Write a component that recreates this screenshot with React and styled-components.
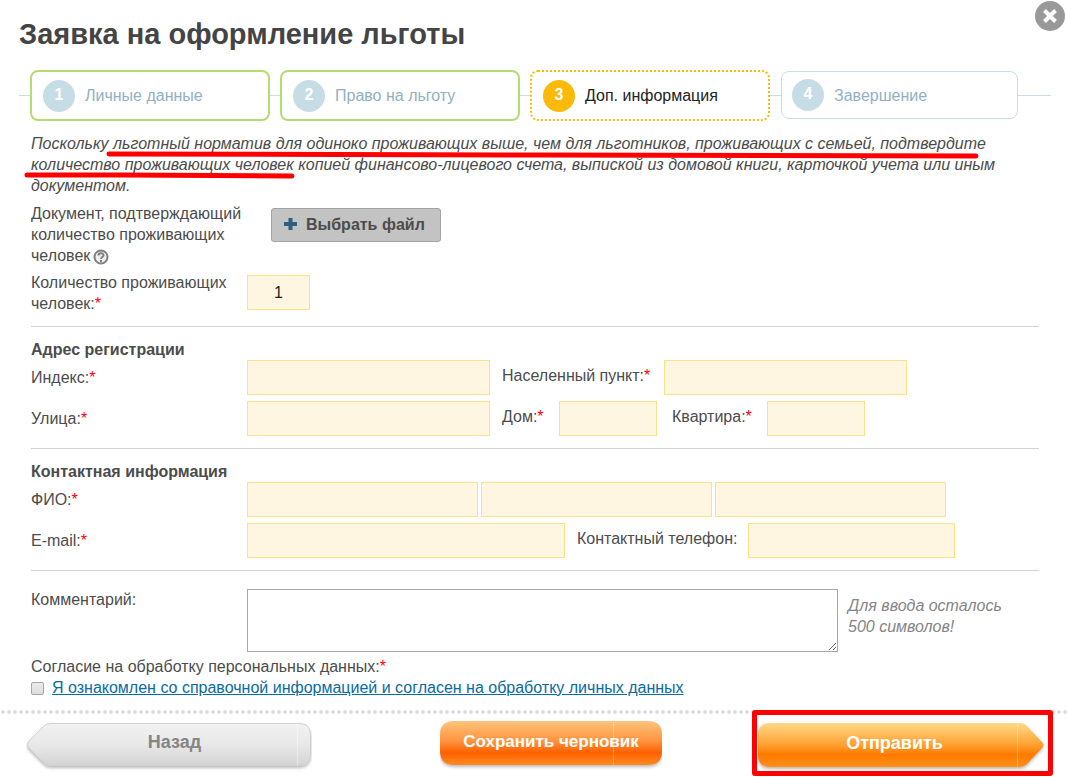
import React, { useId, useState } from "react";
import styled, { createGlobalStyle } from "styled-components";

const GlobalStyle = createGlobalStyle`
  *, *::before, *::after { box-sizing: border-box; }
  body {
    margin: 0;
    background: #fff;
    color: #4c4c4c;
    font-family: "Liberation Sans", Arial, sans-serif;
    font-size: 16px;
    line-height: 21px;
  }
  button, input, textarea { font: inherit; color: inherit; }
`;

const Dialog = styled.main`
  position: relative;
  padding-top: 16px;
`;

const Title = styled.h1`
  margin: 0 60px 18px 19px;
  font-size: 29px;
  line-height: 36px;
  color: #444;
`;

const CloseButton = styled.button`
  position: absolute;
  top: 1px;
  right: 2px;
  width: 30px;
  height: 30px;
  padding: 0;
  border: 0;
  background: none;
  cursor: pointer;
  svg { display: block; }
`;

const Steps = styled.ol`
  position: relative;
  display: grid;
  grid-template-columns: repeat(4, 1fr);
  gap: 10px;
  margin: 0;
  padding: 0 47px 0 30px;
  list-style: none;
  &::before {
    content: "";
    position: absolute;
    left: 19px;
    right: 16px;
    top: 25px;
    border-top: 1px solid #c7dde6;
  }
`;

const stepBorders = {
  done: "2px solid #b4dc73",
  current: "2px dotted #fbb90a",
  next: "1px solid #c7dde6",
};

const Step = styled.li`
  position: relative;
  display: flex;
  align-items: center;
  gap: 10px;
  height: ${(p) => (p.$state === "next" ? 48 : 51)}px;
  margin: ${(p) => (p.$state === "next" ? "1px 2px 0 1px" : "0")};
  padding-left: ${(p) => (p.$state === "next" ? 10 : 11)}px;
  border: ${(p) => stepBorders[p.$state]};
  border-radius: 8px;
  background: #fff;
  color: ${(p) => (p.$state === "current" ? "#222" : "#90b1bf")};
`;

const StepNumber = styled.span`
  width: 32px;
  height: 32px;
  border-radius: 50%;
  background: ${(p) => (p.$active ? "#fbb90a" : "#c7dde6")};
  color: #fff;
  font-weight: bold;
  line-height: 30px;
  text-align: center;
`;

const Form = styled.form`
  padding: 12px 28px 0 31px;
`;

const Note = styled.p`
  position: relative;
  margin: 0;
  font-style: italic;
`;

const Strokes = styled.svg`
  position: absolute;
  left: -7px;
  top: 17px;
  pointer-events: none;
`;

const Section = styled.section`
  padding: ${(p) => (p.$tight ? "7px" : "12px")} 0 12px;
  & + & { border-top: 1px solid #d2d2d2; }
`;

const SectionTitle = styled.h2`
  margin: 0;
  font-size: 16px;
  line-height: 21px;
`;

const Row = styled.div`
  display: flex;
  align-items: flex-start;
  & + & { margin-top: 6px; }
`;

const RowLabel = styled.label`
  flex: 0 0 216px;
  padding-top: ${(p) => p.$drop || 0}px;
`;

const Unbroken = styled.span`
  display: inline-block;
  white-space: nowrap;
`;

const InlineLabel = styled.label`
  flex: 0 0 ${(p) => p.$width}px;
  padding: 5px 0 0 ${(p) => p.$indent || 12}px;
  white-space: nowrap;
`;

const Asterisk = styled.span`
  color: #f00;
`;

const Field = styled.input`
  flex: 0 1 ${(p) => p.$width}px;
  min-width: 0;
  height: 35px;
  margin-top: ${(p) => p.$drop || 0}px;
  padding: 0 6px;
  border: 1px solid #fde08a;
  border-radius: 0;
  background: #fff6e1;
  color: #222;
  text-align: ${(p) => (p.$centered ? "center" : "left")};
  outline: none;
`;

const NameFields = styled.div`
  display: flex;
  flex: 1;
  gap: 3px;
`;

const FileButton = styled.button`
  display: flex;
  align-items: center;
  gap: 9px;
  height: 34px;
  margin: 5px 0 0 24px;
  padding: 0 15px 2px 12px;
  border: 1px solid #a3a3a3;
  border-radius: 3px;
  background: #c3c3c3;
  font-weight: bold;
  cursor: pointer;
`;

const HelpIcon = styled.svg`
  margin-left: 3px;
  vertical-align: -4px;
`;

const Comment = styled.textarea`
  flex: 1;
  min-width: 0;
  height: 63px;
  border: 1px solid #a9a9a9;
  outline: none;
`;

const Hint = styled.p`
  flex: 0 0 201px;
  margin: 0;
  padding: 6px 30px 0 10px;
  color: #858585;
  font-style: italic;
`;

const CommentSection = styled.section`
  padding-top: 18px;
  border-top: 1px solid #d2d2d2;
`;

const Consent = styled.fieldset`
  min-width: 0;
  margin: 4px 0 0;
  padding: 0;
  border: 0;
`;

const ConsentTitle = styled.legend`
  padding: 0;
`;

const ConsentRow = styled.div`
  display: flex;
  align-items: center;
  gap: 8px;
`;

const Checkbox = styled.input`
  appearance: none;
  width: 13px;
  height: 13px;
  margin: 2px 0 0;
  border: 1px solid #a5a5a5;
  border-radius: 2px;
  background: linear-gradient(#ececec, #dcdcdc);
  &:checked { background: #1670a8; }
`;

const Link = styled.a`
  color: #086ca2;
`;

const Footer = styled.footer`
  display: flex;
  align-items: flex-start;
  margin-top: 12px;
  padding: 0 14px 0 26px;
  background: radial-gradient(circle, #dedede 0 1px, #e4e4e4 2px, transparent 2px) 0 0 / 6px 4px repeat-x;
`;

const ActionButton = styled.button`
  position: relative;
  display: block;
  width: ${(p) => p.$width}px;
  height: 52px;
  margin: ${(p) => p.$margin || 0};
  padding: ${(p) => p.$pad};
  border: 0;
  background: none;
  color: ${(p) => p.$color || "#fff"};
  font-size: ${(p) => p.$size}px;
  line-height: 21px;
  font-weight: bold;
  cursor: pointer;
  svg { position: absolute; left: 0; top: 0; }
  span { position: relative; }
`;

const SendFrame = styled.div`
  margin-left: auto;
  height: 66px;
  padding: 8px 4px 0 1px;
  border: 5px solid #f00;
  border-radius: 3px;
  background: #fff;
`;

function Required() {
  return <Asterisk>*</Asterisk>;
}

function ButtonArt({ width, path, stops, stroke, split }) {
  const id = useId().replace(/[^a-zA-Z0-9]/g, "");
  return (
    <svg width={width} height="52" viewBox={`0 0 ${width} 52`} aria-hidden="true">
      <defs>
        <linearGradient id={id} x1="0" y1="0" x2="0" y2="1">
          {stops.map(([offset, color]) => (
            <stop key={offset} offset={offset} stopColor={color} />
          ))}
        </linearGradient>
        <filter id={id + "s"} x="-5%" y="-10%" width="110%" height="140%">
          <feDropShadow dx="0" dy="2" stdDeviation="1.5" floodColor="#555" floodOpacity="0.4" />
        </filter>
      </defs>
      <path d={path} fill={`url(#${id})`} stroke={stroke} filter={`url(#${id}s)`} />
      <path d={`M${split} 1V44`} stroke="#fff" strokeOpacity="0.35" />
    </svg>
  );
}

const steps = [
  ["Личные данные", "done"],
  ["Право на льготу", "done"],
  ["Доп. информация", "current"],
  ["Завершение", "next"],
];

export default function App() {
  const [residents, setResidents] = useState("1");
  return (
    <Dialog>
      <GlobalStyle />
      <Title>Заявка на оформление льготы</Title>
      <CloseButton type="button" aria-label="Закрыть">
        <svg width="30" height="30" viewBox="0 0 30 30">
          <circle cx="15" cy="15" r="15" fill="#999" />
          <path d="M9.500 9.500L20.500 20.500M20.500 9.500L9.500 20.500" stroke="#fff" strokeWidth="4" />
        </svg>
      </CloseButton>

      <Steps>
        {steps.map(([name, state], i) => (
          <Step key={name} $state={state}>
            <StepNumber $active={state === "current"}>{i + 1}</StepNumber>
            {name}
          </Step>
        ))}
      </Steps>

      <Form id="benefit" onSubmit={(e) => e.preventDefault()}>
        <Note>
          Поскольку льготный норматив для одиноко проживающих выше, чем для льготников,
          проживающих с семьей, подтвердите количество проживающих человек копией
          финансово-лицевого счета, выпиской из домовой книги, карточкой учета или иным
          документом.
          <Strokes width="960" height="36" viewBox="0 0 960 36" fill="none" stroke="#f00" strokeWidth="5" strokeLinecap="round" aria-hidden="true">
            <path d="M85 4L520 5L952 6" />
            <path d="M3 25H100L268 26" />
          </Strokes>
        </Note>

        <Section $tight>
          <Row>
            <RowLabel htmlFor="file">
              Документ, подтверждающий количество проживающих человек
              <HelpIcon width="16" height="16" viewBox="0 0 16 16" aria-hidden="true">
                <circle cx="8" cy="8" r="6.500" fill="#eee" stroke="#808080" strokeWidth="2" />
                <path d="M5.500 6.500C5.500 3.500 10.500 3.500 10.500 6.300C10.500 8 8 8 8 10" fill="none" stroke="#808080" strokeWidth="2" />
                <path d="M7 11H9V13H7Z" fill="#808080" />
              </HelpIcon>
            </RowLabel>
            <FileButton id="file" type="button">
              <svg width="13" height="12" viewBox="0 0 13 12" aria-hidden="true">
                <path d="M6.500 0V12M0 6H13" stroke="#2c5f80" strokeWidth="4" />
              </svg>
              Выбрать файл
            </FileButton>
          </Row>
          <Row>
            <RowLabel htmlFor="residents">
              Количество проживающих <Unbroken>человек:<Required /></Unbroken>
            </RowLabel>
            <Field id="residents" $width={63} $drop={3} $centered value={residents} onChange={(e) => setResidents(e.target.value)} />
          </Row>
        </Section>

        <Section>
          <SectionTitle>Адрес регистрации</SectionTitle>
          <Row>
            <RowLabel htmlFor="zip" $drop={7}>Индекс:<Required /></RowLabel>
            <Field id="zip" $width={243} />
            <InlineLabel htmlFor="city" $width={174}>Населенный пункт:<Required /></InlineLabel>
            <Field id="city" $width={243} />
          </Row>
          <Row>
            <RowLabel htmlFor="street" $drop={7}>Улица:<Required /></RowLabel>
            <Field id="street" $width={243} />
            <InlineLabel htmlFor="house" $width={69}>Дом:<Required /></InlineLabel>
            <Field id="house" $width={98} />
            <InlineLabel htmlFor="flat" $width={110} $indent={15}>Квартира:<Required /></InlineLabel>
            <Field id="flat" $width={98} />
          </Row>
        </Section>

        <Section>
          <SectionTitle>Контактная информация</SectionTitle>
          <Row>
            <RowLabel htmlFor="surname" $drop={7}>ФИО:<Required /></RowLabel>
            <NameFields>
              <Field id="surname" $width={231} aria-label="Фамилия" />
              <Field $width={231} aria-label="Имя" />
              <Field $width={231} aria-label="Отчество" />
            </NameFields>
          </Row>
          <Row>
            <RowLabel htmlFor="email" $drop={7}>E-mail:<Required /></RowLabel>
            <Field id="email" type="email" $width={318} />
            <InlineLabel htmlFor="phone" $width={183}>Контактный телефон:</InlineLabel>
            <Field id="phone" type="tel" $width={207} />
          </Row>
        </Section>

        <CommentSection>
          <Row>
            <RowLabel htmlFor="comment">Комментарий:</RowLabel>
            <Comment id="comment" />
            <Hint>Для ввода осталось 500 символов!</Hint>
          </Row>
          <Consent>
            <ConsentTitle>Согласие на обработку персональных данных:<Required /></ConsentTitle>
            <ConsentRow>
              <Checkbox type="checkbox" aria-labelledby="terms" />
              <Link id="terms" href="#terms">Я ознакомлен со справочной информацией и согласен на обработку личных данных</Link>
            </ConsentRow>
          </Consent>
        </CommentSection>
      </Form>

      <Footer>
        <ActionButton type="button" $width={286} $size={18} $color="#858585" $margin="12px 0 0" $pad="10px 0 21px 11px">
          <ButtonArt
            width={286}
            path="M24 1.500H273Q284.500 1.500 284.500 13V32Q284.500 43.500 273 43.500H24Q20 43.500 17 40L3 26Q0 22.500 3 19L17 5Q20 1.500 24 1.500Z"
            stops={[[0, "#f2f2f2"], [0.5, "#e8e8e8"], [1, "#d4d4d4"]]}
            stroke="#d0d0d0"
            split={271.5}
          />
          <span>Назад</span>
        </ActionButton>
        <ActionButton type="button" $width={222} $size={17} $margin="11px 0 0 128px" $pad="10px 0 21px">
          <ButtonArt
            width={222}
            path="M14 0H208Q222 0 222 14V30Q222 44 208 44H14Q0 44 0 30V14Q0 0 14 0Z"
            stops={[[0, "#ffc47c"], [0.45, "#ff9440"], [0.72, "#ff6000"], [1, "#ff8a20"]]}
            split={173.5}
          />
          <span>Сохранить черновик</span>
        </ActionButton>
        <SendFrame>
          <ActionButton type="submit" form="benefit" $width={286} $size={18} $pad="10px 13px 21px 0">
            <ButtonArt
              width={286}
              path="M12 0H262Q266 0 269 3L284 19Q287 22 284 25L269 41Q266 44 262 44H12Q0 44 0 32V12Q0 0 12 0Z"
              stops={[[0, "#ffd98a"], [0.5, "#ffa030"], [0.72, "#ff7a00"], [1, "#ff9018"]]}
              split={259.5}
            />
            <span>Отправить</span>
          </ActionButton>
        </SendFrame>
      </Footer>
    </Dialog>
  );
}
